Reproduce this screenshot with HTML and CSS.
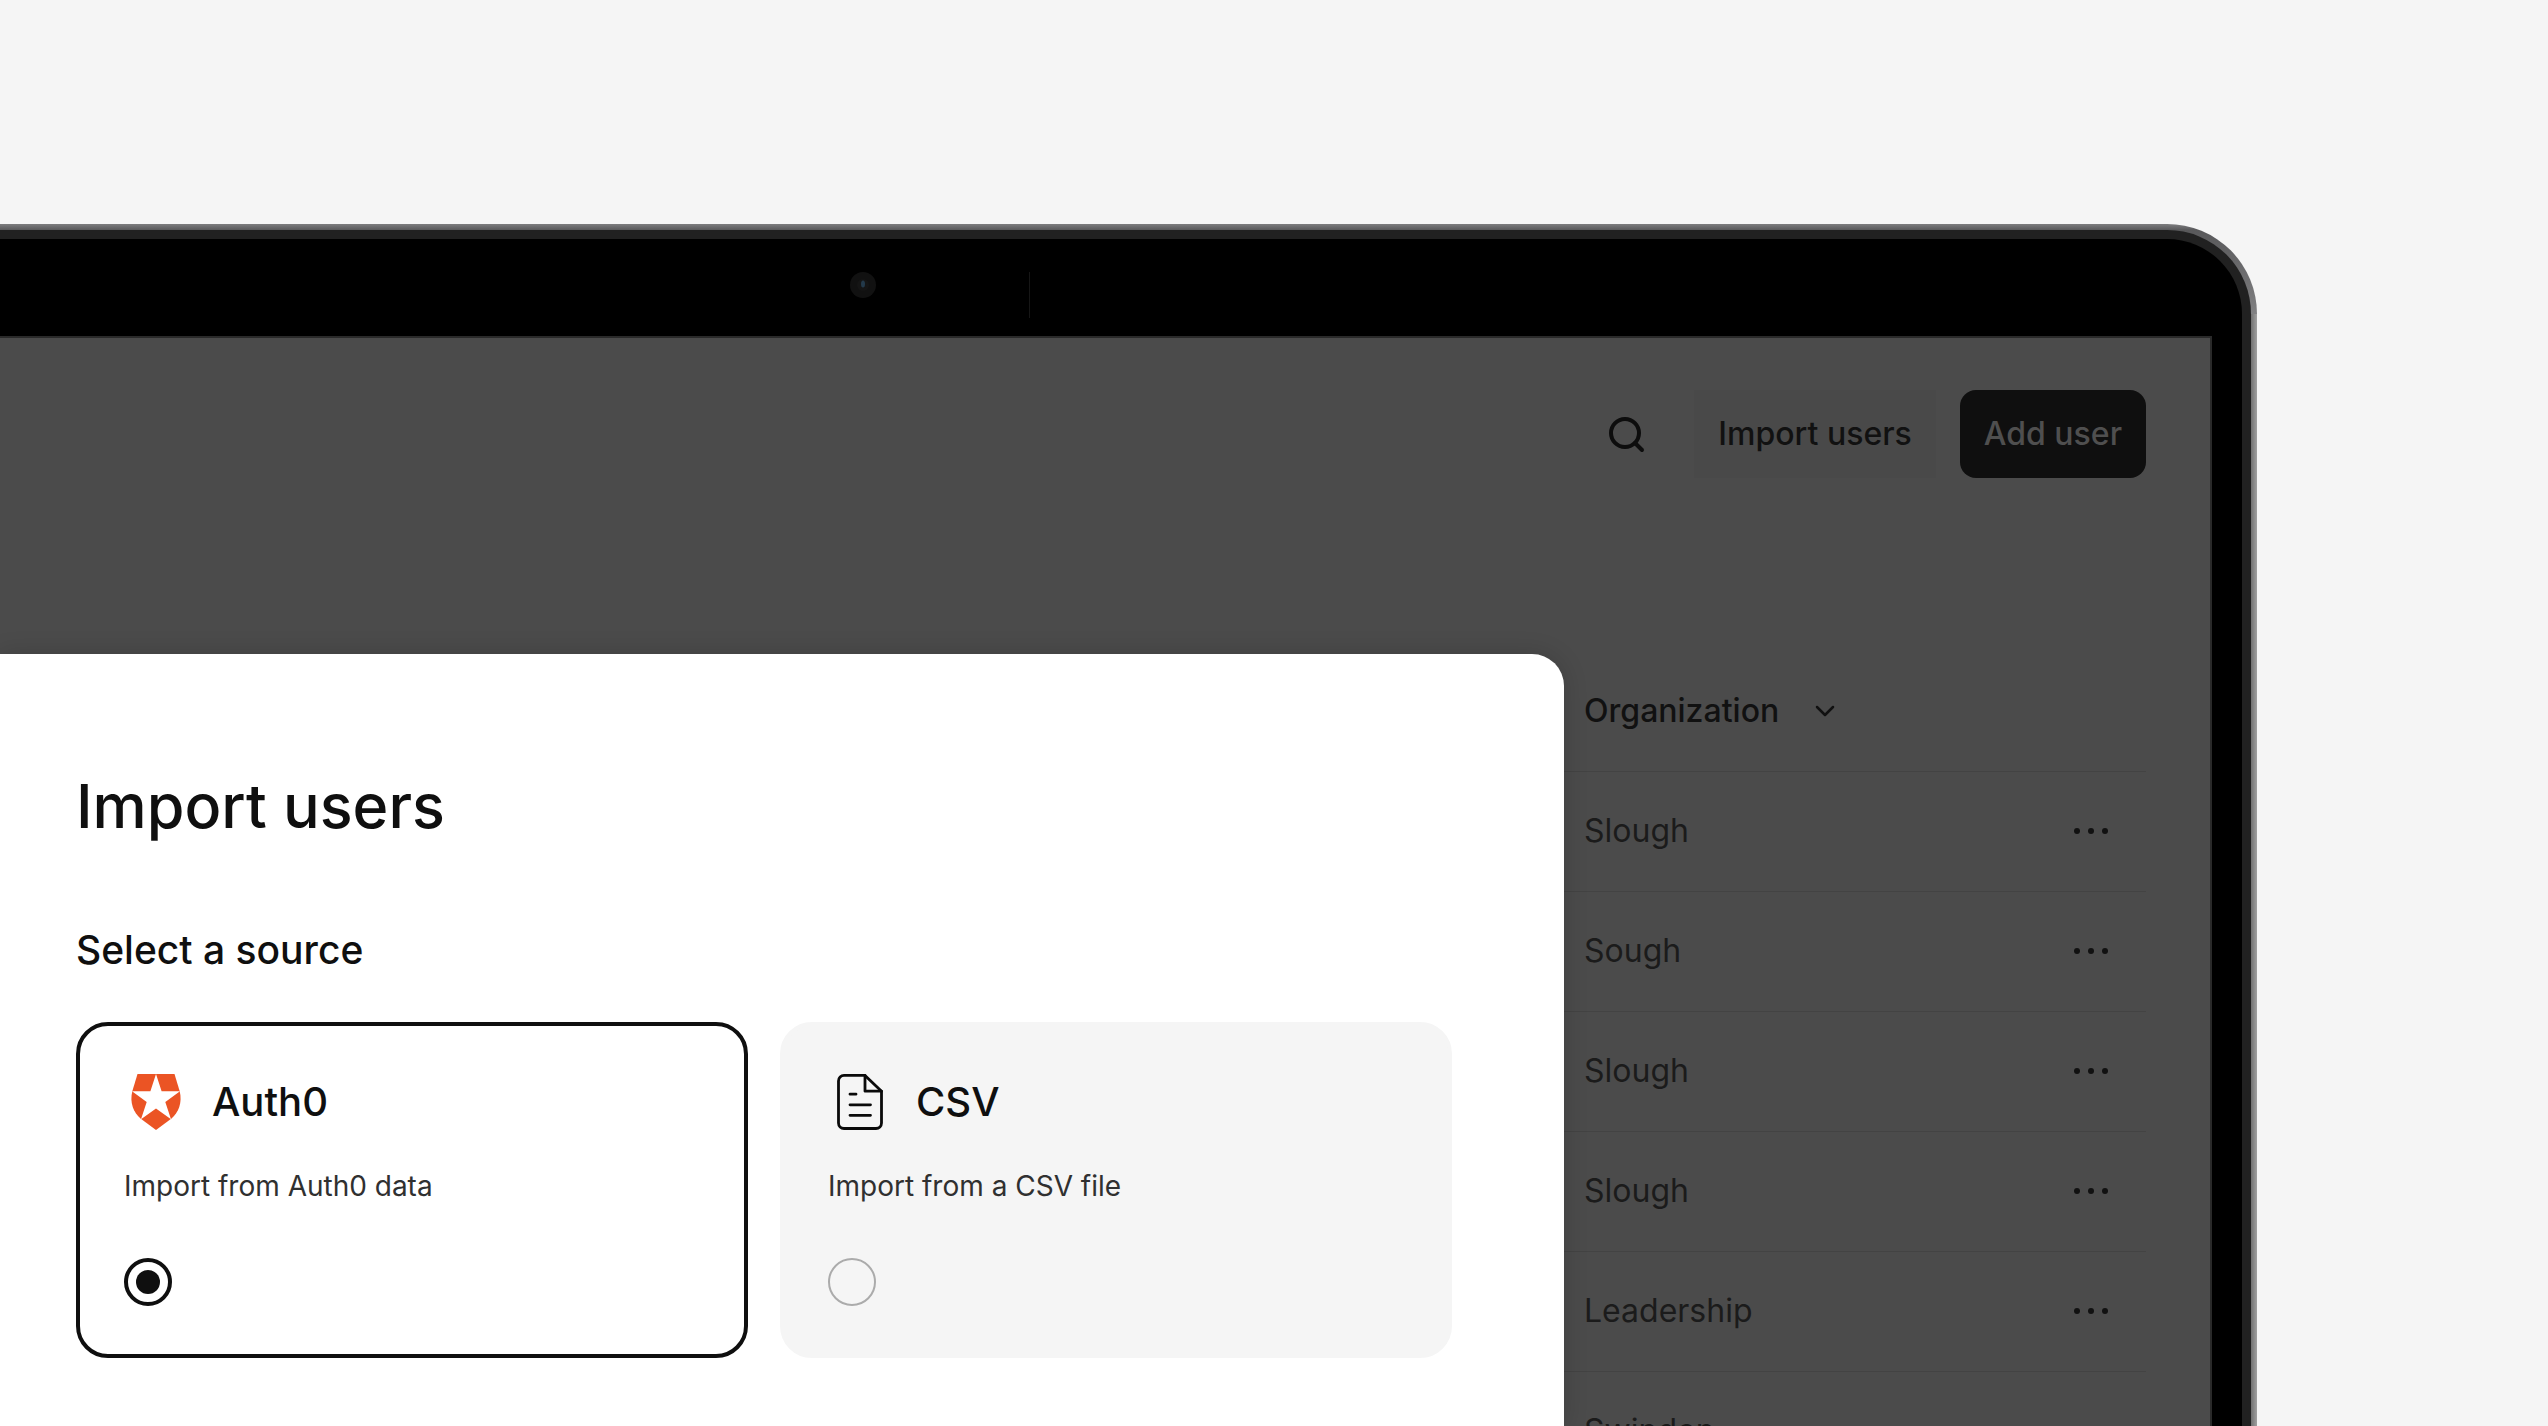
FILE: index.html
```html
<!DOCTYPE html>
<html lang="en">
<head>
<meta charset="utf-8">
<meta name="viewport" content="width=device-width, initial-scale=1">
<title>Import users</title>
<link rel="stylesheet" href="styles.css">
</head>
<body>
<div class="laptop">
  <div class="rim">
    <div class="bezel">
      <div class="camera-bar">
        <svg class="camera" viewBox="0 0 26 26" aria-hidden="true"><circle cx="13" cy="13" r="13" fill="#111"/><circle cx="13" cy="13" r="6" fill="#151515"/><ellipse cx="13" cy="12" rx="2" ry="3.500" fill="#23394a"/></svg>
        <span class="notch"></span>
      </div>
      <main class="screen">
        <header class="toolbar">
          <button class="icon-button" type="button" aria-label="Search">
            <svg viewBox="0 0 40 40" width="40" height="40" fill="none" stroke="#0d0d0d" stroke-width="4" stroke-linecap="round"><circle cx="19" cy="19" r="14"/><path d="M29 29l7 7"/></svg>
          </button>
          <button class="button" type="button">Import users</button>
          <button class="button button-primary" type="button">Add user</button>
        </header>
        <table class="users">
          <thead>
            <tr>
              <th scope="col"><span class="sort">Organization <svg viewBox="0 0 20 12" width="20" height="12" fill="none" stroke="#111" stroke-width="2.500" stroke-linecap="round" stroke-linejoin="round"><path d="M2 2l8 8 8-8"/></svg></span></th>
              <th></th>
            </tr>
          </thead>
          <tbody>
            <tr><td>Slough</td><td class="actions"><button class="more" type="button" aria-label="More"><i></i><i></i><i></i></button></td></tr>
            <tr><td>Sough</td><td class="actions"><button class="more" type="button" aria-label="More"><i></i><i></i><i></i></button></td></tr>
            <tr><td>Slough</td><td class="actions"><button class="more" type="button" aria-label="More"><i></i><i></i><i></i></button></td></tr>
            <tr><td>Slough</td><td class="actions"><button class="more" type="button" aria-label="More"><i></i><i></i><i></i></button></td></tr>
            <tr><td>Leadership</td><td class="actions"><button class="more" type="button" aria-label="More"><i></i><i></i><i></i></button></td></tr>
            <tr><td>Swinden</td><td class="actions"><button class="more" type="button" aria-label="More"><i></i><i></i><i></i></button></td></tr>
          </tbody>
        </table>
        <section class="modal" role="dialog" aria-labelledby="modal-title">
          <h1 id="modal-title" class="modal-title">Import users</h1>
          <fieldset class="sources">
            <legend class="legend">Select a source</legend>
            <div class="cards">
              <label class="card card-selected">
                <span class="card-head">
                  <svg class="card-icon" viewBox="0 0 64 64" aria-hidden="true"><path fill="#eb5424" d="M13.500 4H50.500L55.700 21.200C58.500 33 54.500 42 47.500 48.500L32 60 16.500 48.500C9.500 42 5.500 33 8.300 21.200Z"/><path fill="#fff" d="M32 4l5.600 17.200H56L41.300 32.100 47 49.300 32 38.600 17 49.300 22.700 32.100 8 21.200H26.400Z"/></svg>
                  Auth0
                </span>
                <span class="card-text">Import from Auth0 data</span>
                <input class="radio" type="radio" name="source" value="auth0" checked>
              </label>
              <label class="card">
                <span class="card-head">
                  <svg class="card-icon" viewBox="0 0 64 64" aria-hidden="true" fill="none" stroke="#0a0a0a" stroke-width="2.800" stroke-linecap="round" stroke-linejoin="round"><path d="M37 5.400H16a5.500 5.500 0 0 0-5.500 5.500V53a5.500 5.500 0 0 0 5.500 5.500H48a5.500 5.500 0 0 0 5.500-5.500V21.200Z"/><path d="M37 5.400V21.200H53.500M22 24.200h6M22 34.800H42.500M22 45.300H42.500"/></svg>
                  CSV
                </span>
                <span class="card-text">Import from a CSV file</span>
                <input class="radio" type="radio" name="source" value="csv">
              </label>
            </div>
          </fieldset>
        </section>
      </main>
    </div>
  </div>
</div>
</body>
</html>
```
FILE: styles.css
```css
* {
  box-sizing: border-box;
}

body {
  margin: 0;
  height: 100vh;
  display: flex;
  overflow: hidden;
  background: #f5f5f5;
  color: #0f0f0f;
  font-family: Inter, "Liberation Sans", sans-serif;
}

button {
  padding: 0;
  border: 0;
  background: none;
  color: inherit;
  font: inherit;
}

/* Laptop frame, running off the left and bottom edges */
.laptop {
  flex: 1;
  display: flex;
  margin: 224px 291px 0 0;
  padding: 6px 6px 0 0;
  border-radius: 0 90px 0 0;
  background:
    linear-gradient(to right, transparent calc(100% - 6px), #707070 calc(100% - 6px), #a0a0a0) 0 90px no-repeat,
    linear-gradient(#7d7d7f, #58585a 6px, #808082 90px);
}

.rim {
  flex: 1;
  display: flex;
  padding: 9px 9px 0 0;
  border-radius: 0 84px 0 0;
  background: #212121;
}

.bezel {
  flex: 1;
  display: flex;
  flex-direction: column;
  padding-right: 30px;
  border-radius: 0 75px 0 0;
  background: #000;
}

.camera-bar {
  flex: none;
  display: flex;
  align-items: flex-start;
  gap: 153px;
  height: 97px;
  padding: 33px 0 0 850px;
}

.camera {
  width: 26px;
  height: 26px;
}

.notch {
  width: 1px;
  height: 46px;
  background: #161616;
}

.screen {
  flex: 1;
  min-height: 0;
  position: relative;
  overflow: hidden;
  padding: 52px 64px 0 0;
  border: solid #2a2a2a;
  border-width: 2px 2px 0 0;
  background: #4b4b4b;
  font-size: 32px;
  line-height: 40px;
}

.toolbar {
  display: flex;
  justify-content: flex-end;
  align-items: center;
}

.icon-button {
  display: flex;
  margin-right: 48px;
}

.button {
  height: 88px;
  padding: 0 24px;
  background: #494949;
  color: #111;
  font-weight: 500;
}

.button-primary {
  margin-left: 24px;
  border-radius: 16px;
  background: #0f0f0f;
  color: #4f4f4f;
}

.users {
  width: 640px;
  margin: 173px 0 0 auto;
  border-collapse: collapse;
}

.users tr {
  height: 120px;
  border-bottom: 1px solid #434343;
}

.users th,
.users td {
  padding: 0 0 0 78px;
  text-align: left;
  color: #1b1b1b;
}

.users th {
  color: #111;
  font-weight: 500;
}

.users .actions {
  width: 80px;
  padding: 0 38px 0 0;
}

.sort {
  display: flex;
  align-items: center;
  gap: 36px;
}

.more {
  display: flex;
  gap: 8px;
  margin-left: auto;
}

.more i {
  width: 6px;
  height: 6px;
  border-radius: 50%;
  background: #111;
}

/* Dialog over the page */
.modal {
  position: absolute;
  top: 316px;
  left: 0;
  right: 646px;
  bottom: 0;
  padding: 112px 112px 0 76px;
  border-radius: 0 32px 0 0;
  background: #fff;
  box-shadow: 0 0 24px rgba(0, 0, 0, 0.16);
}

.modal-title {
  margin: 0 0 76px;
  font-size: 61px;
  line-height: 80px;
  font-weight: 500;
}

.sources {
  min-width: 0;
  margin: 0;
  padding: 0;
  border: 0;
}

.legend {
  margin-bottom: 44px;
  padding: 0;
  font-size: 39px;
  line-height: 56px;
  font-weight: 500;
}

.cards {
  display: grid;
  grid-template-columns: 1fr 1fr;
  gap: 32px;
}

.card {
  display: flex;
  flex-direction: column;
  padding: 44px 44px 48px;
  border: 4px solid #f5f5f5;
  border-radius: 32px;
  background: #f5f5f5;
}

.card-selected {
  border-color: #0f0f0f;
  background: #fff;
}

.card-head {
  display: flex;
  align-items: center;
  gap: 24px;
  margin-bottom: 32px;
  font-size: 40px;
  font-weight: 500;
}

.card-icon {
  width: 64px;
  height: 64px;
}

.card-text {
  margin-bottom: 52px;
  font-size: 28px;
  color: #303030;
}

.radio {
  appearance: none;
  width: 48px;
  height: 48px;
  margin: 0;
  border: 2px solid #ababab;
  border-radius: 50%;
}

.radio:checked {
  border: 4px solid #0f0f0f;
  padding: 8px;
  background: #0f0f0f content-box;
}
```
